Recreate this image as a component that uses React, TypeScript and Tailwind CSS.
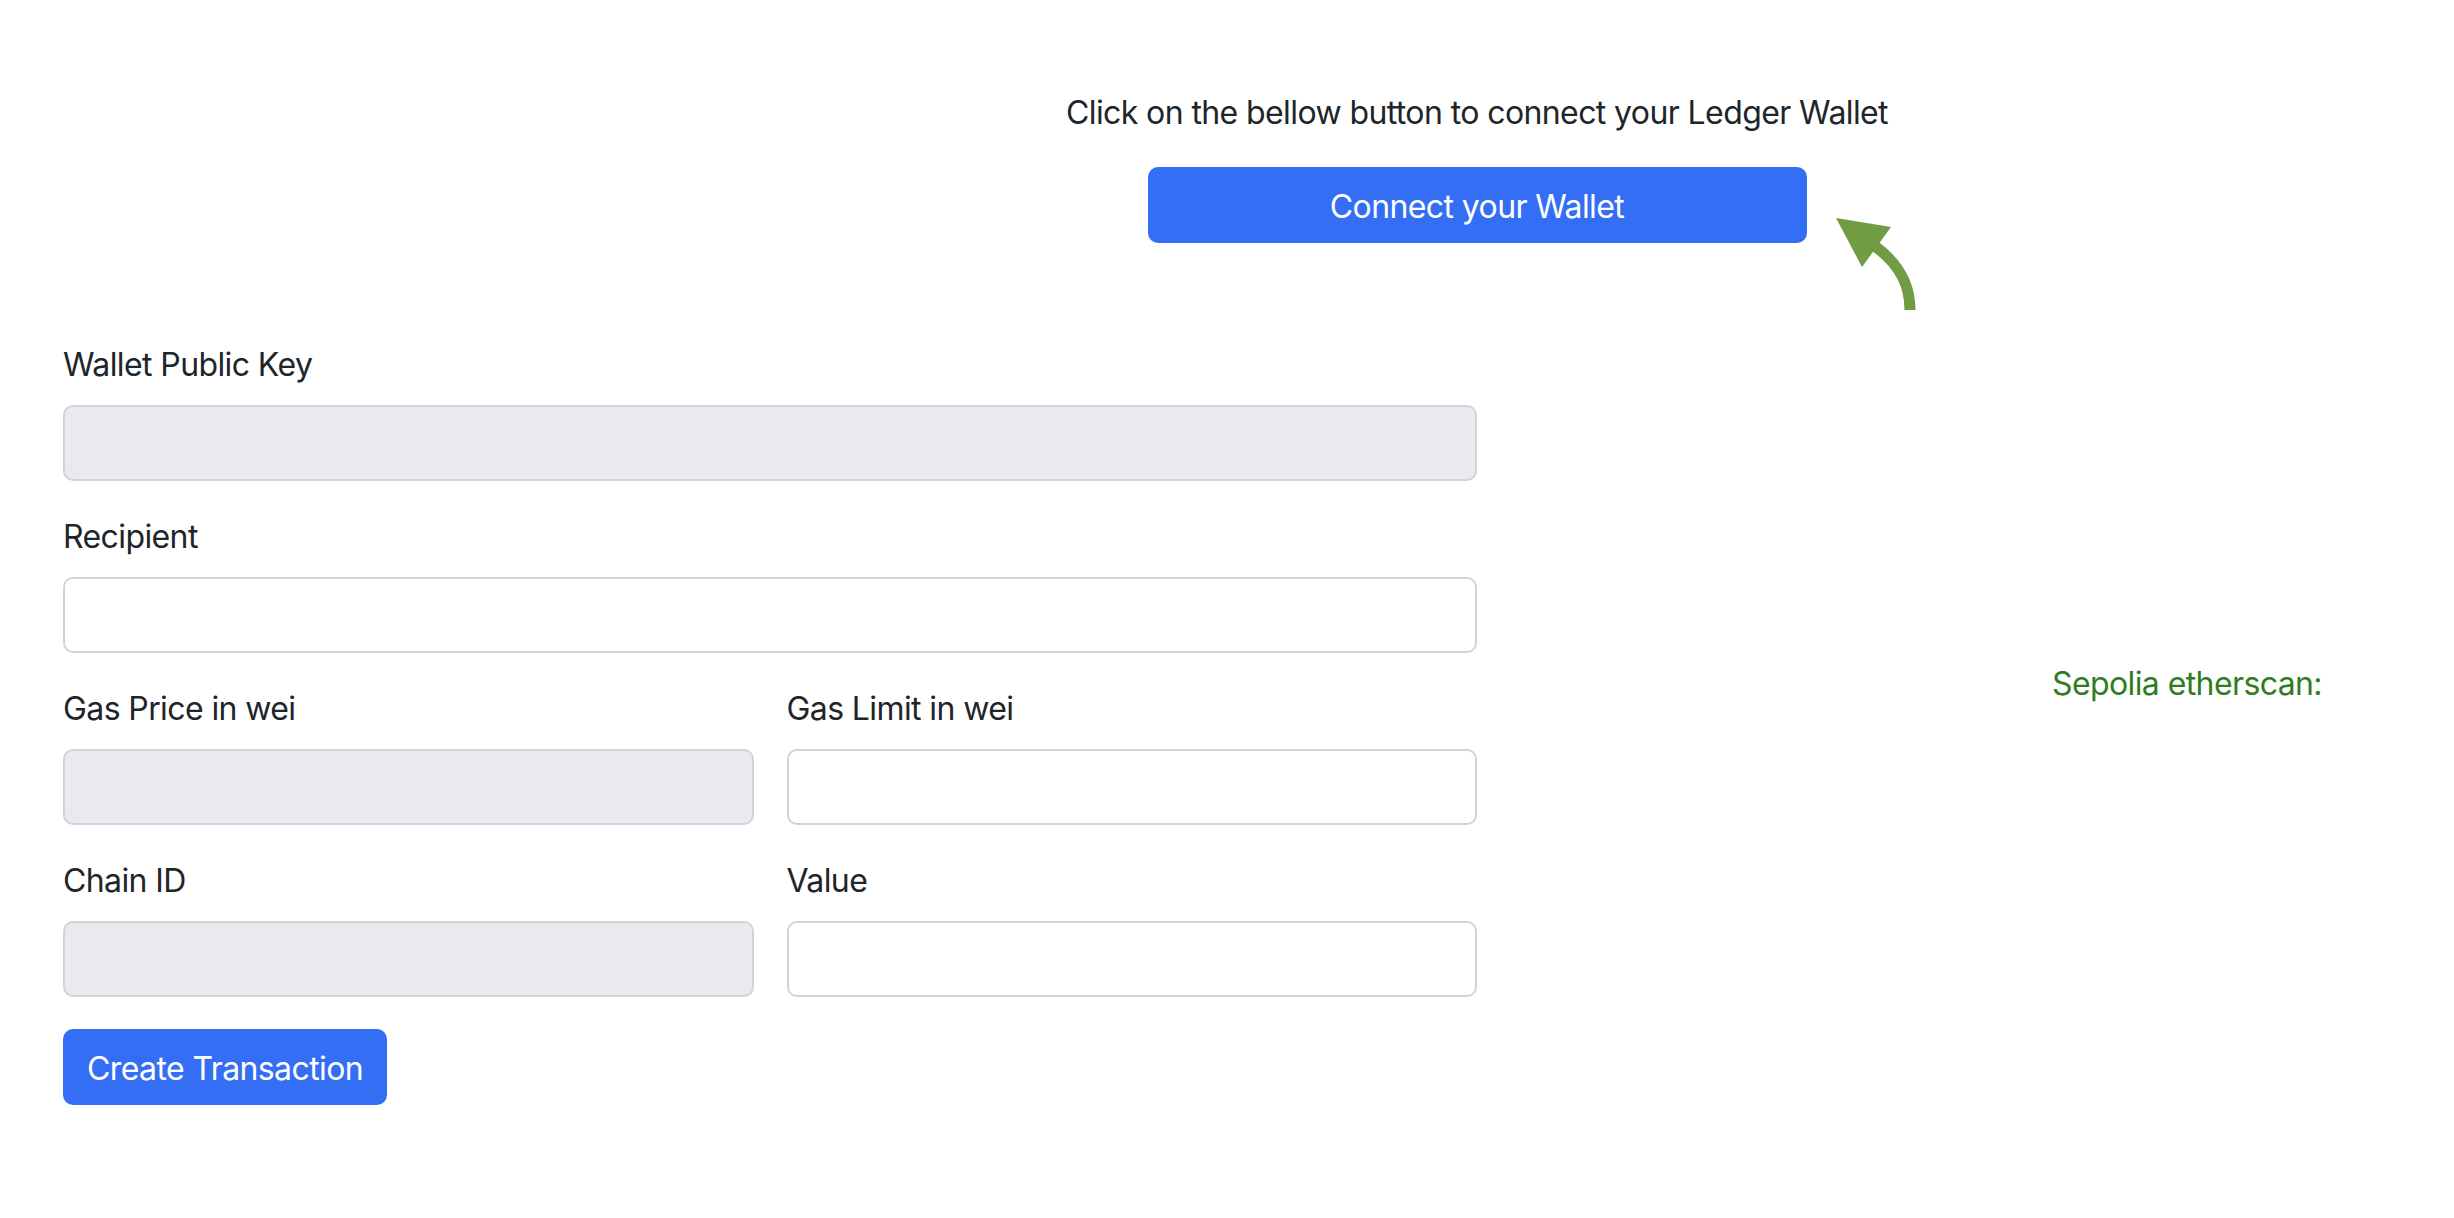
import React from "react";

const FIELD_LABEL = "block mb-[16px]";
const FIELD_INPUT =
  "block w-full h-[76px] px-[24px] rounded-[10px] border-2 border-[#d0d4da] outline-none";

function Field({
  label,
  disabled,
}: {
  label: string;
  disabled?: boolean;
}) {
  return (
    <div className="mb-[32px]">
      <label className={FIELD_LABEL}>{label}</label>
      <input
        className={`${FIELD_INPUT} ${disabled ? "bg-[#e9eaee]" : "bg-white"}`}
        disabled={disabled}
      />
    </div>
  );
}

export default function App() {
  return (
    <div className="min-h-screen bg-white text-[#212529] text-[32px] leading-[48px] tracking-[-0.6px] font-['Inter','Liberation_Sans',sans-serif]">
      <div className="relative">
        <div className="ml-[818px] w-[1318px] pt-[89px] text-center">
          <p>Click on the bellow button to connect your Ledger Wallet</p>
          <button className="mt-[30px] w-[659px] h-[76px] pt-[3px] rounded-[10px] bg-[#346ef5] text-white">
            Connect your Wallet
          </button>
        </div>
        {/* pointer arrow */}
        <svg
          className="absolute left-[1820px] top-[200px]"
          width="120"
          height="120"
          viewBox="0 0 120 120"
        >
          <path
            d="M90 110 C 90 85, 80 65, 56 47"
            fill="none"
            stroke="#719c43"
            strokeWidth="11"
          />
          <polygon points="16,18 71,27 42,67" fill="#719c43" />
        </svg>
      </div>

      <div className="flex mt-[98px]">
        <form className="ml-[63px] w-[1414px]" onSubmit={(e) => e.preventDefault()}>
          <Field label="Wallet Public Key" disabled />
          <Field label="Recipient" />
          <div className="grid grid-cols-2 gap-x-[33px]">
            <Field label="Gas Price in wei" disabled />
            <Field label="Gas Limit in wei" />
            <Field label="Chain ID" disabled />
            <Field label="Value" />
          </div>
          <button
            type="submit"
            className="h-[76px] px-[24px] pt-[3px] rounded-[10px] bg-[#346ef5] text-white"
          >
            Create Transaction
          </button>
        </form>
        <div className="pl-[575px] pt-[319px]">
          <p className="text-[#2f7d22] whitespace-nowrap">Sepolia etherscan:</p>
        </div>
      </div>
    </div>
  );
}
